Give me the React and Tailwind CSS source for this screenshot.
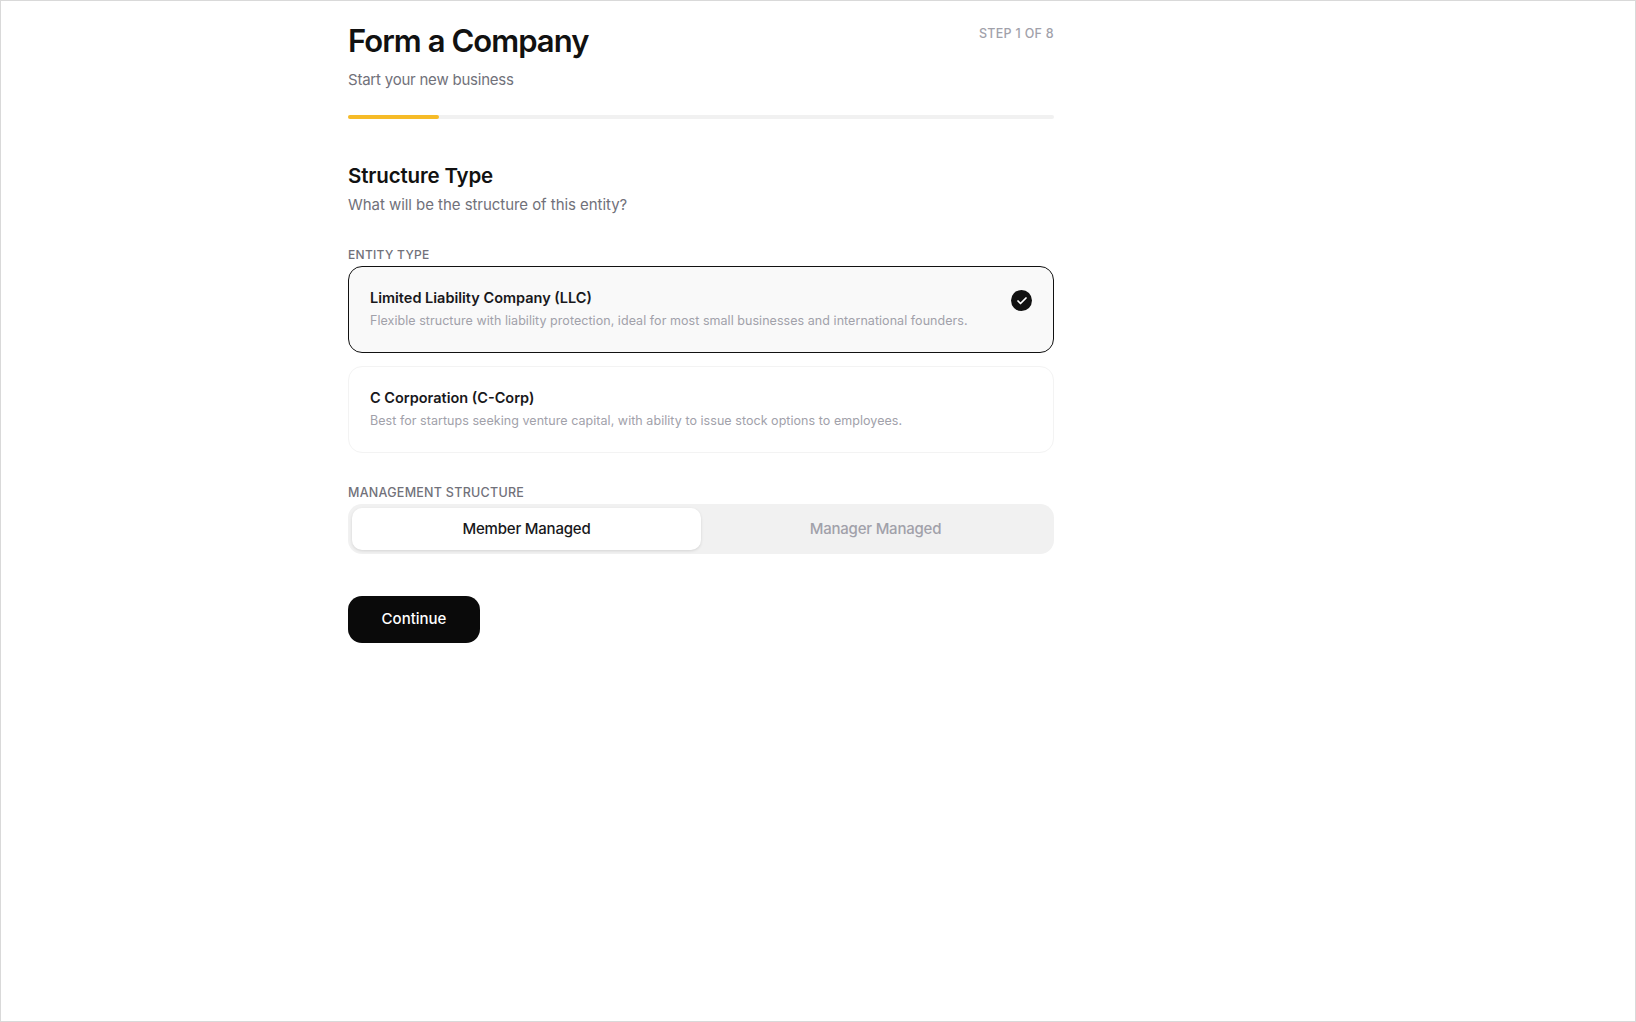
import React from "react";
import { Check } from "lucide-react";

const head = "font-['Inter','Liberation_Sans',sans-serif]";

function Card({ title, desc, selected }) {
  return (
    <div
      className={`flex h-[87px] items-start justify-between rounded-[14px] border px-[21px] pt-[21px] ${
        selected ? "border-[#111111] bg-[#f9f9f9]" : "border-[#f3f3f3] bg-white"
      }`}
    >
      <div>
        <div className="text-[14.5px] leading-[20px] font-semibold tracking-[0px] text-[#18181b]">{title}</div>
        <div className="mt-[3px] text-[12.5px] leading-[20px] tracking-[0.05px] text-[#a1a1aa]">{desc}</div>
      </div>
      {selected && (
        <div className="mt-[2px] flex h-[21px] w-[21px] items-center justify-center rounded-full bg-[#111111] text-white">
          <Check size={12} strokeWidth={3.5} />
        </div>
      )}
    </div>
  );
}

export default function App() {
  return (
    <div className={`h-[1022px] border border-[#d9d9d9] bg-white ${head}`}>
      <div className="ml-[347px] w-[706px] pt-[22px]">
        <div className="flex items-start justify-between">
          <div>
            <h1 className="text-[31px] leading-[36px] font-semibold tracking-[-0.95px] text-[#111111]">Form a Company</h1>
            <p className="mt-[10px] text-[15px] leading-[22px] tracking-[-0.22px] text-[#71717a]">Start your new business</p>
          </div>
          <div className="mt-[2px] text-[12.5px] leading-[18px] font-medium tracking-[0.3px] text-[#a1a1aa]">STEP 1 OF 8</div>
        </div>
        <div className="mt-[24px] h-1 rounded-full bg-[#f1f1f1]">
          <div className="h-1 w-[91px] rounded-full bg-[#f6bb27]" />
        </div>

        <h2 className="mt-[43px] text-[20.5px] leading-[28px] font-semibold tracking-[-0.15px] text-[#111111]">Structure Type</h2>
        <p className="mt-[4px] text-[15px] leading-[22px] tracking-[-0.05px] text-[#71717a]">What will be the structure of this entity?</p>

        <div className="mt-[30px] text-[12px] leading-[18px] font-medium tracking-[0.3px] text-[#71717a]">ENTITY TYPE</div>
        <div className="mt-[2px] flex flex-col gap-[13px]">
          <Card selected title="Limited Liability Company (LLC)" desc="Flexible structure with liability protection, ideal for most small businesses and international founders." />
          <Card title="C Corporation (C-Corp)" desc="Best for startups seeking venture capital, with ability to issue stock options to employees." />
        </div>

        <div className="mt-[31px] text-[12.5px] leading-[18px] font-medium tracking-[0.27px] text-[#71717a]">MANAGEMENT STRUCTURE</div>
        <div className="mt-[2px] flex h-[50px] rounded-[14px] bg-[#f1f1f1] p-1">
          <div className="flex flex-1 items-center justify-center rounded-[10px] bg-white text-[15px] font-medium tracking-[-0.2px] text-[#18181b] shadow-[0_1px_3px_rgba(0,0,0,0.12)]">Member Managed</div>
          <div className="flex flex-1 items-center justify-center text-[15px] font-medium tracking-[-0.22px] text-[#a1a1aa]">Manager Managed</div>
        </div>

        <button className="mt-[42px] flex h-[47px] w-[132px] items-center justify-center rounded-[14px] bg-[#0a0a0a] text-[15px] font-medium text-white">Continue</button>
      </div>
    </div>
  );
}
